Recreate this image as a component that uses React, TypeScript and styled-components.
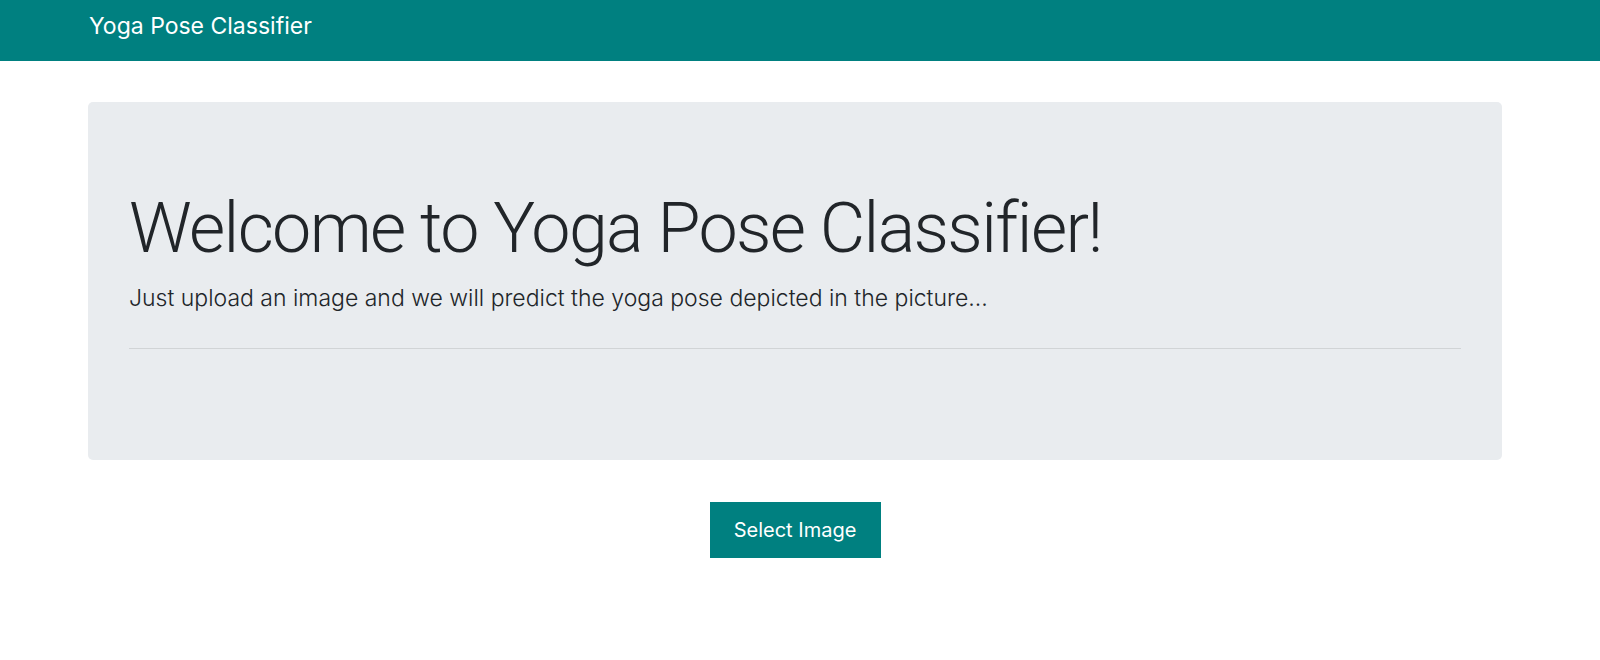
import React from "react";
import styled, { createGlobalStyle } from "styled-components";

const Global = createGlobalStyle`
  html, body { margin: 0; padding: 0; background: #fff; }
  body {
    font-family: Inter, Roboto, "Liberation Sans", sans-serif;
    color: #212529;
    -webkit-font-smoothing: antialiased;
  }
`;

const Navbar = styled.nav`
  box-sizing: border-box;
  height: 61px;
  background: #008080;
  display: flex;
  align-items: flex-start;
  padding: 12px 0 0 89px;
`;

const Brand = styled.a`
  color: #fff;
  font-size: 23px;
  font-weight: 400;
  line-height: normal;
  text-decoration: none;
`;

const Main = styled.main`
  width: 1590px;
  display: flex;
  flex-direction: column;
  align-items: center;
  padding-top: 41px;
`;

const Jumbotron = styled.section`
  box-sizing: border-box;
  width: 1414px;
  height: 358px;
  background: #e9ecef;
  border-radius: 5px;
  padding: 84px 41px 0;
`;

const Title = styled.h1`
  margin: 0 0 11px;
  font-family: Roboto, Inter, sans-serif;
  font-size: 70px;
  font-weight: 300;
  letter-spacing: -1.65px;
  line-height: 84px;
`;

const Lead = styled.p`
  margin: 0;
  font-size: 23px;
  font-weight: 300;
  line-height: 1.5;
`;

const Rule = styled.hr`
  margin: 32px 0 0;
  border: 0;
  border-top: 1px solid rgba(0, 0, 0, 0.1);
`;

const Button = styled.button`
  margin-top: 42px;
  width: 171px;
  height: 56px;
  background: #008080;
  color: #fff;
  border: 0;
  border-radius: 0;
  font-family: inherit;
  font-size: 20px;
  font-weight: 400;
  cursor: pointer;
`;

export default function App() {
  return (
    <>
      <Global />
      <Navbar>
        <Brand href="#">Yoga Pose Classifier</Brand>
      </Navbar>
      <Main>
        <Jumbotron>
          <Title>Welcome to Yoga Pose Classifier!</Title>
          <Lead>Just upload an image and we will predict the yoga pose depicted in the picture...</Lead>
          <Rule />
        </Jumbotron>
        <Button>Select Image</Button>
      </Main>
    </>
  );
}
